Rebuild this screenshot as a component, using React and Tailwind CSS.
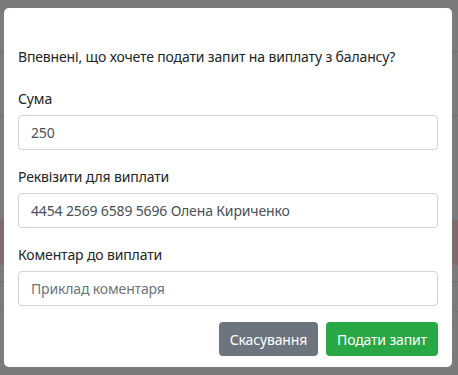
import React from "react";

const font = { fontFamily: '"Noto Sans", "Open Sans", sans-serif' };

const Field = ({ label, value, muted, first }) => (
  <div className={first ? "mt-5" : "mt-4"}>
    <label className="block text-[14px] tracking-[-0.15px] leading-[22px] text-[#212529]">{label}</label>
    <div
      className={`mt-[5px] h-[35px] flex items-center px-3 border border-[#ced4da] rounded-[4px] text-[14px] tracking-[-0.15px] ${
        muted ? "text-[#6c757d]" : "text-[#495057]"
      }`}
    >
      {value}
    </div>
  </div>
);

const App = () => {
  return (
    <div className="relative w-[458px] h-[375px] overflow-hidden bg-[#7b7b7b]" style={font}>
      {/* dimmed page behind the modal */}
      <div className="flex flex-col">
        <div className="h-[52px] border-b border-[#707070]" />
        <div className="h-[64px] border-b border-[#707070]" />
        <div className="h-[104px]" />
        <div className="h-[45px] bg-[#7f6b6b]" />
        <div className="h-[17px] border-b border-[#707070]" />
        <div className="h-[30px] border-b border-[#707070]" />
      </div>

      <div className="absolute left-[4px] top-[8px] w-[448px] h-[359px] bg-white rounded-[5px] px-[14px] pt-[38px]">
        <p className="text-[14px] tracking-[-0.15px] leading-[22px] text-[#212529]">
          Впевнені, що хочете подати запит на виплату з балансу?
        </p>
        <Field label="Сума" value="250" first />
        <Field label="Реквізити для виплати" value="4454 2569 6589 5696 Олена Кириченко" />
        <Field label="Коментар до виплати" value="Приклад коментаря" muted />
        <div className="mt-4 flex justify-end gap-2">
          <button
            type="button"
            className="h-[34px] w-[99px] rounded-[4px] bg-[#6c757d] text-white text-[14px] tracking-[-0.15px]"
          >
            Скасування
          </button>
          <button
            type="button"
            className="h-[34px] w-[112px] rounded-[4px] bg-[#28a745] text-white text-[14px] tracking-[-0.15px]"
          >
            Подати запит
          </button>
        </div>
      </div>
    </div>
  );
};

export default App;
